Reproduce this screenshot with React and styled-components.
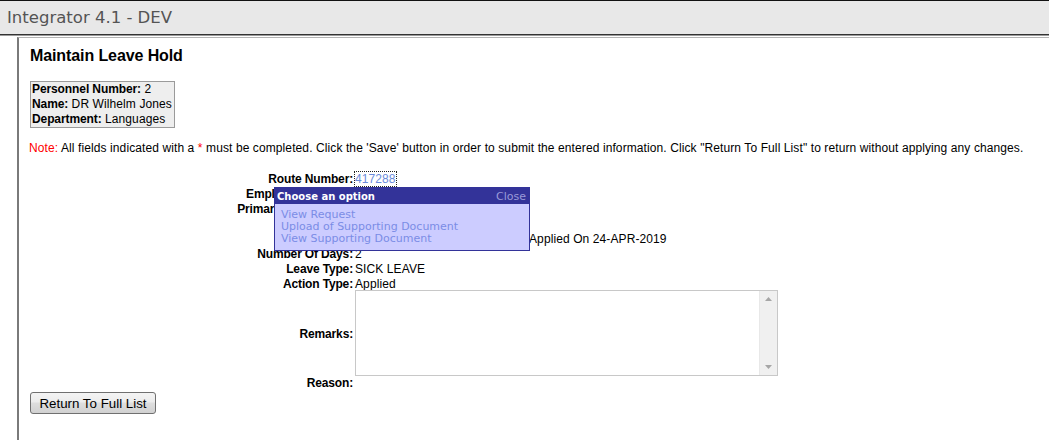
import React from "react";
import styled, { createGlobalStyle } from "styled-components";

const Global = createGlobalStyle`
  html, body { margin: 0; padding: 0; background: #fff; }
  body {
    font-family: "Liberation Sans", Arial, sans-serif;
    font-size: 12px;
    letter-spacing: 0.1px;
    color: #000;
    overflow: hidden;
  }
  b { letter-spacing: -0.1px; }
`;

const Header = styled.div`
  height: 33px;
  background: #e8e8e8;
  border-top: 1px solid #111;
  border-bottom: 1px solid #333;
  box-shadow: 0 1px 0 #9a9a9a;
  display: flex;
  align-items: center;
  padding-left: 7px;
`;

const HeaderTitle = styled.span`
  font-family: "DejaVu Sans", Verdana, sans-serif;
  font-size: 16.5px;
  letter-spacing: 0;
  color: #545454;
`;

const Frame = styled.div`
  margin: 2px 0 0 17px;
  border-left: 2px solid #7a7a7a;
  border-top: 1px solid #b4b4b4;
  padding: 9px 0 0 11px;
  height: 393px;
  position: relative;
`;

const Title = styled.h1`
  margin: 0 0 16px;
  font-size: 16px;
  line-height: 18px;
  font-weight: bold;
  letter-spacing: -0.1px;
`;

const InfoBox = styled.div`
  display: inline-block;
  border: 1px solid #9a9a9a;
  background: #eeeeee;
  padding: 0 3px 0 1px;
  line-height: 15px;
  width: 139px;
`;

const InfoLine = styled.div`
  white-space: nowrap;
`;

const Note = styled.p`
  margin: 13px 0 0 -1px;
  line-height: 14px;
  white-space: nowrap;
`;

const Red = styled.span`
  color: #ff0000;
`;

const Form = styled.div`
  margin-top: 17px;
  display: grid;
  grid-template-columns: 323px 1fr;
  grid-template-rows: repeat(8, 15px) 84px 15px;
  column-gap: 2px;
  position: relative;
`;

const Label = styled.div`
  font-weight: bold;
  letter-spacing: -0.15px;
  text-align: right;
  white-space: nowrap;
  line-height: 15px;
  align-self: ${(p) => (p.$middle ? "center" : "start")};
`;

const Value = styled.div`
  white-space: nowrap;
  line-height: 15px;
  padding-left: ${(p) => p.$indent || 0}px;
`;

const RouteLink = styled.a`
  color: #6b8bdb;
  text-decoration: none;
  outline: 1px dotted #222;
`;

const RemarksBox = styled.div`
  box-sizing: border-box;
  width: 423px;
  height: 86px;
  margin-top: -2px;
  border: 1px solid #c8c8c8;
  display: flex;
  background: #fff;
`;

const Remarks = styled.textarea`
  flex: 1;
  border: none;
  outline: none;
  resize: none;
  margin: 0;
  padding: 2px;
  font-family: "Liberation Sans", Arial, sans-serif;
  font-size: 12px;
`;

const ScrollBar = styled.div`
  width: 17px;
  background: #f0f0f0;
  border-left: 1px solid #e8e8e8;
  display: flex;
  flex-direction: column;
  justify-content: space-between;
  align-items: center;
  padding: 6px 0;
`;

const Arrow = ({ down }) => (
  <svg width="7" height="4" viewBox="0 0 7 4">
    <path d={down ? "M0 0 L7 0 L3.5 4 Z" : "M0 4 L3.5 0 L7 4 Z"} fill="#a6a6a6" />
  </svg>
);

const Popup = styled.div`
  position: absolute;
  left: 244px;
  top: 15px;
  width: 254px;
  border: 1px solid #333399;
  background: #ccccff;
  font-family: "DejaVu Sans", Verdana, sans-serif;
  font-size: 11px;
  letter-spacing: 0;
  z-index: 2;
`;

const PopupHead = styled.div`
  background: #333399;
  height: 16px;
  display: flex;
  align-items: center;
  justify-content: space-between;
  padding: 0 3px 0 2px;
  color: #fff;
  font-size: 10px;
  font-weight: bold;
`;

const CloseLink = styled.span`
  color: #9a9ad8;
  font-size: 11px;
  font-weight: normal;
`;

const PopupBody = styled.div`
  padding: 5px 6px 5px;
  line-height: 12px;
`;

const PopupItem = styled.div`
  color: #7b8ce6;
`;

const Button = styled.button`
  margin-top: 1px;
  width: 126px;
  height: 22px;
  border: 1px solid #707070;
  border-radius: 3px;
  background: linear-gradient(#f4f4f4, #ececec 45%, #dedede 50%, #d1d1d1);
  font-family: "Liberation Sans", Arial, sans-serif;
  font-size: 13.33px;
  letter-spacing: 0;
  color: #000;
  padding: 0;
`;

export default function App() {
  return (
    <>
      <Global />
      <Header>
        <HeaderTitle>Integrator 4.1 - DEV</HeaderTitle>
      </Header>
      <Frame>
        <Title>Maintain Leave Hold</Title>
        <InfoBox>
          <InfoLine><b>Personnel Number:</b> 2</InfoLine>
          <InfoLine><b>Name:</b> DR Wilhelm Jones</InfoLine>
          <InfoLine><b>Department:</b> Languages</InfoLine>
        </InfoBox>
        <Note>
          <Red>Note:</Red> All fields indicated with a <Red>*</Red> must be completed. Click the 'Save' button in order to submit the entered information. Click "Return To Full List" to return without applying any changes.
        </Note>
        <Form>
          <Label>Route Number:</Label>
          <Value><RouteLink href="#">417288</RouteLink></Value>
          <Label>Employee Number:</Label>
          <Value />
          <Label>Primary Department:</Label>
          <Value />
          <Label />
          <Value />
          <Label />
          <Value $indent={174}>Applied On 24-APR-2019</Value>
          <Label>Number Of Days:</Label>
          <Value>2</Value>
          <Label>Leave Type:</Label>
          <Value>SICK LEAVE</Value>
          <Label>Action Type:</Label>
          <Value>Applied</Value>
          <Label $middle>Remarks:</Label>
          <div>
            <RemarksBox>
              <Remarks />
              <ScrollBar>
                <Arrow />
                <Arrow down />
              </ScrollBar>
            </RemarksBox>
          </div>
          <Label>Reason:</Label>
          <Value />
          <Popup>
            <PopupHead>
              <span>Choose an option</span>
              <CloseLink>Close</CloseLink>
            </PopupHead>
            <PopupBody>
              <PopupItem>View Request</PopupItem>
              <PopupItem>Upload of Supporting Document</PopupItem>
              <PopupItem>View Supporting Document</PopupItem>
            </PopupBody>
          </Popup>
        </Form>
        <Button>Return To Full List</Button>
      </Frame>
    </>
  );
}
